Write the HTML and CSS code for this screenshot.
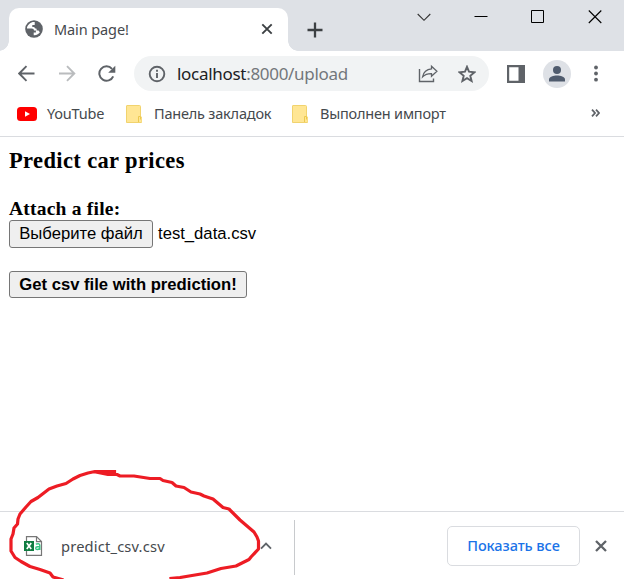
FILE: index.html
```html
<!DOCTYPE html>
<html lang="ru">
<head>
<meta charset="utf-8">
<title>Main page!</title>
<link rel="stylesheet" href="styles.css">
</head>
<body>
<div class="browser">
  <header class="tabstrip">
    <div class="tab">
      <svg class="globe" width="18" height="18" viewBox="0 0 18 18"><circle cx="9" cy="9" r="8.8" fill="#5f6368"/><path d="M9.8 2.2C8 1.9 6 2.4 4.5 3.7 2.5 5.2 1.8 7.1 2 8.6h4.9c1.2 0 1.9.8 2.1 1.8h1.9v2.1H8.700v2.700c2.800.2 5.200-1 6.300-3.200-.8-.3-1.200-.8-1.400-1.600h-2V8.700c-1.400-.2-2.300-.9-2.200-1.800H7.300V5.100h2.400z" fill="#fff"/></svg>
      <span class="tab-title">Main page!</span>
      <svg class="tab-close" width="12" height="12" viewBox="0 0 12 12"><path d="M1.300 1.300l9.400 9.400M10.700 1.300l-9.400 9.400" stroke="#3c4043" stroke-width="1.900"/></svg>
    </div>
    <svg class="new-tab" width="16" height="16" viewBox="0 0 16 16"><path d="M8 .5v15M.5 8h15" stroke="#3c4043" stroke-width="2.300"/></svg>
    <div class="window-controls">
      <svg width="14" height="14" viewBox="0 0 14 14"><path d="M.7 4l6.300 6.300L13.300 4" fill="none" stroke="#333" stroke-width="1.100"/></svg>
      <svg width="14" height="14" viewBox="0 0 14 14"><path d="M.5 6.500h13" stroke="#000"/></svg>
      <svg width="14" height="14" viewBox="0 0 14 14"><path d="M.5.500h12v12h-12z" fill="none" stroke="#000"/></svg>
      <svg width="14" height="14" viewBox="0 0 14 14"><path d="M.8.5l12.500 12.500M13.300.5L.8 13" stroke="#000" stroke-width="1.100"/></svg>
    </div>
  </header>
  <nav class="toolbar">
    <svg class="back" width="18" height="18" viewBox="0 0 18 18"><path d="M16.500 8.500H2M8.500 1.200L1.200 8.500l7.300 7.300" fill="none" stroke="#5f6368" stroke-width="1.900"/></svg>
    <svg class="forward" width="18" height="18" viewBox="0 0 18 18"><path d="M1 8.500h15M9 1.200l7.300 7.300L9 15.800" fill="none" stroke="#babcbe" stroke-width="1.900"/></svg>
    <svg class="reload" width="18" height="18" viewBox="0 0 18 18"><path d="M15.200 11.300A7.200 7.200 0 1 1 14 3.800" fill="none" stroke="#5f6368" stroke-width="2"/><path d="M17.300.7v7.100h-7.100z" fill="#5f6368"/></svg>
    <div class="address">
      <svg class="info" width="18" height="18" viewBox="0 0 18 18"><circle cx="9" cy="9" r="7.300" fill="none" stroke="#5f6368" stroke-width="1.900"/><path d="M9 8v5M9 4.800v1.900" stroke="#5f6368" stroke-width="1.900"/></svg>
      <span class="url"><span class="host">localhost</span>:8000/upload</span>
      <svg class="share" width="20" height="20" viewBox="0 0 20 20"><path d="M1.500 5v12.500h14v-3" fill="none" stroke="#5f6368" stroke-width="1.400"/><path d="M13.500 2.200l5.400 5-5.400 5V9.600c-4-.1-6.700 1-8.900 3.200.8-4.300 4-7.500 8.900-7.900z" fill="none" stroke="#5f6368" stroke-width="1.300"/></svg>
      <svg class="star" width="18" height="18" viewBox="0 0 18 18"><path d="M9 1.800l2 4.900 5.500.5-4.200 3.600 1.300 5.200L9 13.200 4.400 16l1.300-5.200-4.200-3.600 5.500-.5z" fill="none" stroke="#5f6368" stroke-width="1.900"/></svg>
    </div>
    <svg class="panel" width="18" height="18" viewBox="0 0 18 18"><path d="M1 1h16v16H1z" fill="#fff" stroke="#5f6368" stroke-width="2.400"/><path d="M11.500 1H18v16h-6.500z" fill="#5f6368"/></svg>
    <svg class="avatar" width="28" height="28" viewBox="0 0 28 28"><circle cx="14" cy="14" r="14" fill="#dee1e6"/><circle cx="14" cy="10" r="4" fill="#4f5b6d"/><path d="M6 21.500v-2.200c0-2.700 4.600-3.900 8-3.900s8 1.200 8 3.900v2.200z" fill="#4f5b6d"/></svg>
    <svg class="menu" width="4" height="18" viewBox="0 0 4 18"><g fill="#5f6368"><circle cx="2" cy="2.500" r="1.900"/><circle cx="2" cy="8.500" r="1.900"/><circle cx="2" cy="14.700" r="1.900"/></g></svg>
  </nav>
  <div class="bookmarks">
    <svg class="youtube" width="20" height="14" viewBox="0 0 20 14"><rect width="20" height="14" rx="3.500" fill="#f00"/><path d="M8 4.200v5.600l5-2.800z" fill="#fff"/></svg>
    <span class="mark mark-youtube">YouTube</span>
    <svg class="folder" width="16" height="18" viewBox="0 0 16 18"><path d="M.5 1Q.5.500 1 .5h12.500q1 0 1 1v10q1.500.3 1.500 2v3q0 1-1 1H.5z" fill="#ffe694" stroke="#f1d36e"/><path d="M12.500 17v-5.500h2v3" fill="none" stroke="#ecc94f"/></svg>
    <span class="mark mark-panel">Панель закладок</span>
    <svg class="folder" width="16" height="18" viewBox="0 0 16 18"><path d="M.5 1Q.5.500 1 .5h12.500q1 0 1 1v10q1.500.3 1.500 2v3q0 1-1 1H.5z" fill="#ffe694" stroke="#f1d36e"/><path d="M12.500 17v-5.500h2v3" fill="none" stroke="#ecc94f"/></svg>
    <span class="mark mark-import">Выполнен импорт</span>
    <svg class="more" width="9" height="8" viewBox="0 0 9 8"><path d="M1 .7L4 4 1 7.300M5 .7L8 4 5 7.300" fill="none" stroke="#5f6368" stroke-width="1.800"/></svg>
  </div>
  <main class="page">
    <h1>Predict car prices</h1>
    <label class="attach" for="choose">Attach a file:</label>
    <div class="file-row"><button id="choose" class="choose">Выберите файл</button><span class="file-name">test_data.csv</span></div>
    <button class="submit">Get csv file with prediction!</button>
  </main>
  <footer class="downloads">
    <div class="download">
      <svg class="csv" width="20" height="20" viewBox="0 0 20 20"><path d="M2.500.6h10l5 5v13.800h-15z" fill="#fff" stroke="#777" stroke-width="1.200"/><path d="M12.500.6v5h5" fill="none" stroke="#777" stroke-width="1.200"/><path d="M0 5h10v10H0z" fill="#107c41"/><path d="M2.800 7l4.400 6M7.200 7l-4.400 6" stroke="#fff" stroke-width="1.700"/><path d="M11.800 8.200q4-1.400 4 1.300V14M15.800 10.700h-2.300q-1.800.1-1.800 1.500 0 1.300 1.500 1.300 1.500 0 2.600-1.300" fill="none" stroke="#33c481" stroke-width="1.400"/></svg>
      <span class="download-name">predict_csv.csv</span>
      <svg class="chevron" width="12" height="8" viewBox="0 0 12 8"><path d="M1 6.700l5-5 5 5" fill="none" stroke="#5f6368" stroke-width="1.900"/></svg>
    </div>
    <button class="show-all"><span>Показать все</span></button>
    <svg class="bar-close" width="12" height="12" viewBox="0 0 12 12"><path d="M1 1l10 10M11 1L1 11" stroke="#5f6368" stroke-width="2.300"/></svg>
  </footer>
  <svg class="annotation" width="624" height="579" viewBox="0 0 624 579"><path d="M114.500 471.500H95L88 473 80 475.500 73 479 66 483.500 57 486 49 489 38 497.500 31 501.500 26 507 20 514 18 519 17.500 524 14 528 13 534 11 539V551L15 557.500 21 561.500 30 566.500 40 569.500 50 573 53 577 62 579.500M96 472L108 474.500H117L120 476H134L150 478.500H160L163 480.500 172 482.500 176 486 184 487.500 191 492 200 494 204 496 213 499 223 507.500 229 509 240 520 254 532 257 537 258.500 541V549L251 557 249 559.500 236 566 221 568.500 207 573 192 575.500 180 577.500 171 578.500" fill="none" stroke="#ed1c24" stroke-width="3.200" stroke-linejoin="round" stroke-linecap="square"/></svg>
</div>
</body>
</html>
```
FILE: styles.css
```css
* { box-sizing: border-box; }
body { margin: 0; background: #fff; }
svg { display: block; flex: none; }
button { margin: 0; color: #000; }
.browser {
  position: relative;
  display: flex;
  flex-direction: column;
  width: 624px;
  height: 579px;
  overflow: hidden;
  font-family: "Noto Sans", "Open Sans", sans-serif;
}
.tabstrip { display: flex; height: 51px; background: #dee1e6; }
.tab {
  position: relative;
  display: flex;
  align-items: center;
  width: 279px;
  height: 43px;
  margin: 8px 0 0 9px;
  padding: 0 15px 1px 16px;
  background: #fff;
  border-radius: 10px 10px 0 0;
}
.tab::before, .tab::after {
  content: "";
  position: absolute;
  bottom: 0;
  width: 10px;
  height: 10px;
}
.tab::before { left: -10px; background: radial-gradient(circle at 0 0, transparent 9.5px, #fff 10px); }
.tab::after { right: -10px; background: radial-gradient(circle at 100% 0, transparent 9.5px, #fff 10px); }
.tab-title { margin-left: 11px; font-size: 14.500px; letter-spacing: -0.1px; color: #45494d; }
.tab-close { margin-left: auto; }
.new-tab { margin: 22px 0 0 19px; }
.window-controls { display: flex; gap: 43px; margin: 10px 22px 0 auto; }
.toolbar { display: flex; align-items: center; height: 45px; }
.back { margin-left: 18px; }
.forward { margin-left: 22px; }
.reload { margin-left: 22px; }
.address {
  display: flex;
  align-items: center;
  width: 355px;
  height: 35px;
  margin-left: 18px;
  padding: 0 13px 0 14px;
  background: #f1f3f4;
  border-radius: 18px;
}
.url { margin-left: 11px; font-size: 17px; letter-spacing: -0.3px; color: #73777b; white-space: nowrap; }
.host { color: #202124; }
.share { margin-left: auto; }
.star { margin-left: 20px; }
.panel { margin-left: 18px; }
.avatar { margin-left: 18px; }
.menu { margin-left: 23px; }
.bookmarks { display: flex; align-items: center; height: 41px; padding: 0 24px 5px 17px; border-bottom: 1px solid #dadce0; }
.mark { margin-bottom: 1px; font-size: 14.500px; letter-spacing: -0.2px; color: #45494d; white-space: nowrap; }
.mark-youtube { width: 57px; margin-left: 10px; margin-right: 22px; }
.mark-panel { width: 117px; margin-left: 12px; margin-right: 21px; }
.mark-import { margin-left: 12px; }
.more { margin-left: auto; margin-bottom: 2px; }
.page { display: flex; flex: 1; flex-direction: column; align-items: flex-start; padding-left: 9px; font-family: "Liberation Serif", serif; }
h1 { margin: 11px 0 0; font-size: 22.500px; line-height: 26px; letter-spacing: 0.37px; }
.attach { margin-top: 24px; font-size: 19.500px; font-weight: 700; line-height: 21px; letter-spacing: 0.22px; }
.file-row { display: flex; align-items: center; margin-top: 1px; font: 16.670px "Liberation Sans", sans-serif; }
.choose, .submit {
  padding: 0;
  border: 1px solid #767676;
  border-radius: 3px;
  background: #efefef;
  font: 16.670px "Liberation Sans", sans-serif;
  white-space: nowrap;
}
.choose { width: 144px; height: 28px; }
.file-name { margin-left: 5px; }
.submit { width: 238px; height: 27px; margin-top: 23px; font-weight: 700; }
.downloads { display: flex; align-items: center; height: 68px; padding: 1px 17px 0 0; border-top: 1px solid #dadce0; }
.download { display: flex; align-items: center; width: 295px; height: 55px; padding: 0 0 3px 24px; border-right: 1px solid #c8cacd; margin-top: 3px; }
.download-name { margin: 0 0 0 17px; width: 106px; font-size: 14.700px; letter-spacing: 0.17px; color: #45494d; white-space: nowrap; }
.chevron { margin-left: 93px; }
.show-all { width: 133px; height: 40px; margin: 0 0 1px 152px; padding: 0 0 2px; border: 1px solid #dadce0; border-radius: 5px; background: #fff; color: #1a73e8; font: 500 14.500px "Noto Sans", sans-serif; letter-spacing: -0.05px; white-space: nowrap; }
.bar-close { margin-left: auto; }
.annotation { position: absolute; inset: 0; pointer-events: none; }
```
